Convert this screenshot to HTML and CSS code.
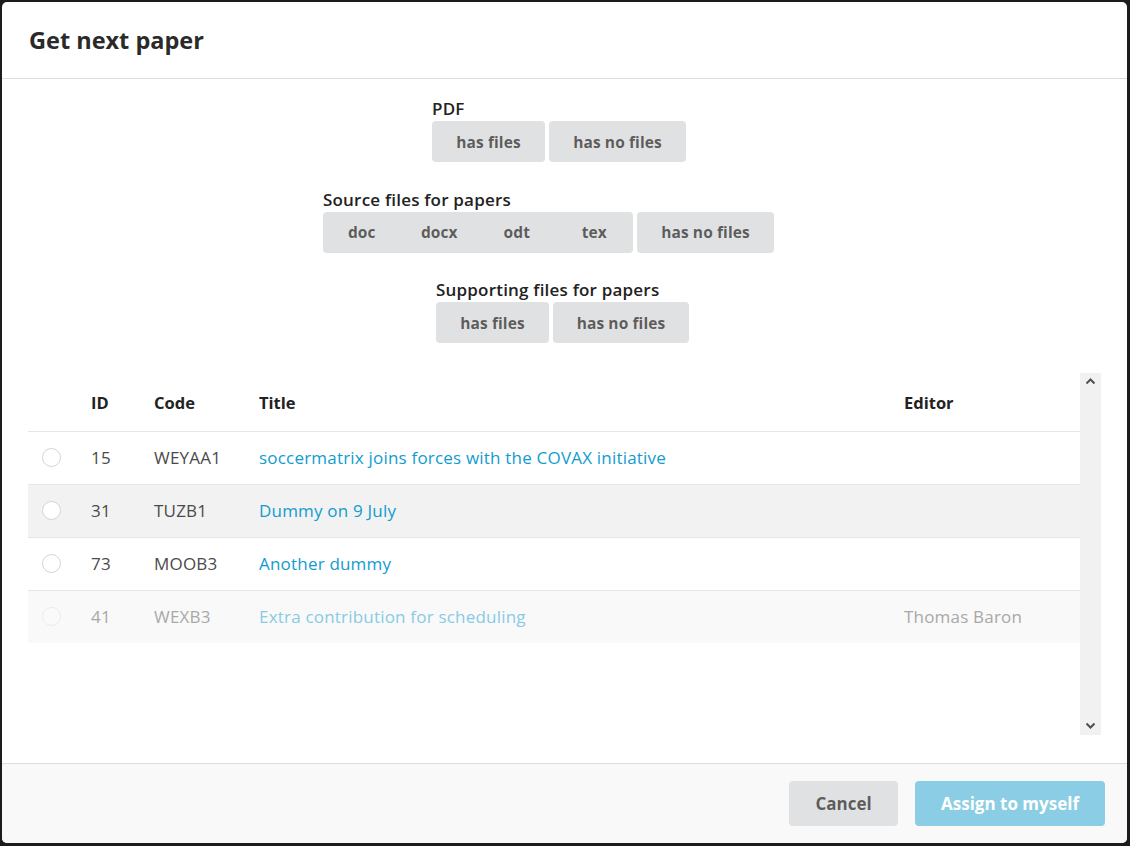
FILE: index.html
```html
<!DOCTYPE html>
<html>
<head>
<meta charset="utf-8">
<link rel="stylesheet" href="styles.css">
</head>
<body>
<div class="modal">
  <div class="modal-header">Get next paper</div>
  <div class="modal-content">
    <div class="filters">
      <div class="filter filter-pdf">
        <div class="filter-label">PDF</div>
        <div class="btn-row">
          <span class="btn w113">has files</span>
          <span class="btn w137">has no files</span>
        </div>
      </div>
      <div class="filter filter-source">
        <div class="filter-label">Source files for papers</div>
        <div class="btn-row">
          <span class="btn-group">
            <span class="btn seg">doc</span><span class="btn seg">docx</span><span class="btn seg">odt</span><span class="btn seg">tex</span>
          </span>
          <span class="btn w137">has no files</span>
        </div>
      </div>
      <div class="filter filter-supp">
        <div class="filter-label">Supporting files for papers</div>
        <div class="btn-row">
          <span class="btn w113">has files</span>
          <span class="btn w136">has no files</span>
        </div>
      </div>
    </div>

    <div class="table-wrap">
      <div class="table-scroll">
        <table class="papers">
          <colgroup>
            <col class="c-radio"><col class="c-id"><col class="c-code"><col class="c-title"><col class="c-editor">
          </colgroup>
          <thead>
            <tr><th></th><th>ID</th><th>Code</th><th>Title</th><th>Editor</th></tr>
          </thead>
          <tbody>
            <tr>
              <td><span class="radio"></span></td><td>15</td><td>WEYAA1</td>
              <td><a class="link">soccermatrix joins forces with the COVAX initiative</a></td><td></td>
            </tr>
            <tr class="hover">
              <td><span class="radio"></span></td><td>31</td><td>TUZB1</td>
              <td><a class="link">Dummy on 9 July</a></td><td></td>
            </tr>
            <tr>
              <td><span class="radio"></span></td><td>73</td><td>MOOB3</td>
              <td><a class="link">Another dummy</a></td><td></td>
            </tr>
            <tr class="disabled">
              <td><span class="radio"></span></td><td>41</td><td>WEXB3</td>
              <td><a class="link">Extra contribution for scheduling</a></td><td>Thomas Baron</td>
            </tr>
          </tbody>
        </table>
      </div>
      <div class="scrollbar">
        <svg class="arrow" width="9" height="6" viewBox="0 0 9 6"><path d="M0.5 5.5 L4.5 1.5 L8.5 5.5" fill="none" stroke="#505050" stroke-width="2"/></svg>
        <svg class="arrow" width="9" height="6" viewBox="0 0 9 6"><path d="M0.5 0.5 L4.5 4.5 L8.5 0.5" fill="none" stroke="#505050" stroke-width="2"/></svg>
      </div>
    </div>
  </div>
  <div class="modal-footer">
    <span class="fbtn cancel">Cancel</span>
    <span class="fbtn assign">Assign to myself</span>
  </div>
</div>
</body>
</html>
```

FILE: styles.css
```css
* { box-sizing: border-box; }
html, body { margin: 0; padding: 0; }
body {
  background: #1c1c1c;
  width: 1130px;
  height: 846px;
  padding: 2px 3px 3px 2px;
  font-family: "Open Sans", "Lato", sans-serif;
  overflow: hidden;
}
.modal {
  background: #fff;
  width: 1125px;
  height: 841px;
  border-radius: 5px;
  display: flex;
  flex-direction: column;
  overflow: hidden;
}
.modal-header {
  height: 77px;
  border-bottom: 1px solid #dcdcdc;
  padding: 23px 27px 0;
  font-size: 23.5px;
  font-weight: 700;
  color: #2a2a2a;
  line-height: 30px;
}
.modal-content {
  flex: 1;
  padding: 18px 26px 0;
}
.filters {
  display: flex;
  flex-direction: column;
  gap: 25.5px;
}
.filter { display: flex; flex-direction: column; }
.filter-pdf { margin-left: 404px; }
.filter-source { margin-left: 295px; }
.filter-supp { margin-left: 408px; }
.filter-label {
  font-size: 17px;
  font-weight: 600;
  letter-spacing: 0.2px;
  color: #222;
  line-height: 22px;
  margin-bottom: 2px;
  margin-top: 1px;
  margin-bottom: 1px;
}
.btn-row { display: flex; gap: 4px; }
.btn {
  display: inline-flex;
  align-items: center;
  justify-content: center;
  height: 41px;
  background: #e0e1e2;
  color: rgba(0,0,0,0.6);
  font-size: 15.5px;
  letter-spacing: 0.1px;
  font-weight: 700;
  border-radius: 4px;
}
.w113 { width: 113px; }
.w137 { width: 137px; }
.w136 { width: 136px; }
.btn-group { display: inline-flex; border-radius: 4px; overflow: hidden; }
.btn.seg { width: 77.5px; border-radius: 0; }

.table-wrap {
  margin-top: 30px;
  height: 362px;
  display: flex;
}
.table-scroll { flex: 1; overflow: hidden; }
.scrollbar {
  width: 21px;
  background: #f1f1f1;
  display: flex;
  flex-direction: column;
  justify-content: space-between;
  align-items: center;
  padding: 5px 0 6px;
}
.papers {
  width: 1052px;
  table-layout: fixed;
  border-collapse: collapse;
  font-size: 17px;
  color: #4a4a4a;
}
.c-radio { width: 49px; }
.c-id { width: 63px; }
.c-code { width: 105px; }
.c-title { width: 645px; }
.c-editor { width: 190px; }
.papers th {
  text-align: left;
  font-size: 16.5px;
  font-weight: 700;
  color: #222;
  height: 58px;
  padding: 19px 14px 0;
  vertical-align: top;
  border-bottom: 1px solid #e6e6e6;
  line-height: 22px;
}
.papers td {
  height: 53px;
  padding: 0 14px;
  border-bottom: 1px solid #e6e6e6;
  line-height: 22px;
  letter-spacing: 0.2px;
  white-space: nowrap;
}
.papers tbody tr:last-child td { border-bottom: none; }
.papers tr.hover td { background: #f2f2f2; }
.papers tr.disabled td { background: #f9f9f9; color: #a8a8a8; }
.link { color: #119ccf; text-decoration: none; }
.disabled .link { color: #88cbe4; }
.radio {
  display: block;
  width: 19px;
  height: 19px;
  border-radius: 50%;
  border: 1px solid #d4d4d5;
  background: #fff;
  margin-top: -1px;
}
.disabled .radio { border-color: #ececec; background: #fafafa; }

.modal-footer {
  height: 80px;
  border-top: 1px solid #dcdcdc;
  background: #f9f9f9;
  display: flex;
  justify-content: flex-end;
  align-items: flex-start;
  gap: 17px;
  padding: 17px 22px 0 0;
}
.fbtn {
  display: inline-flex;
  align-items: center;
  justify-content: center;
  height: 45px;
  border-radius: 4px;
  font-size: 17px;
  font-weight: 700;
}
.cancel { width: 109px; background: #e0e1e2; color: rgba(0,0,0,0.6); }
.assign { width: 190px; background: #8acde4; color: #fff; }
```
